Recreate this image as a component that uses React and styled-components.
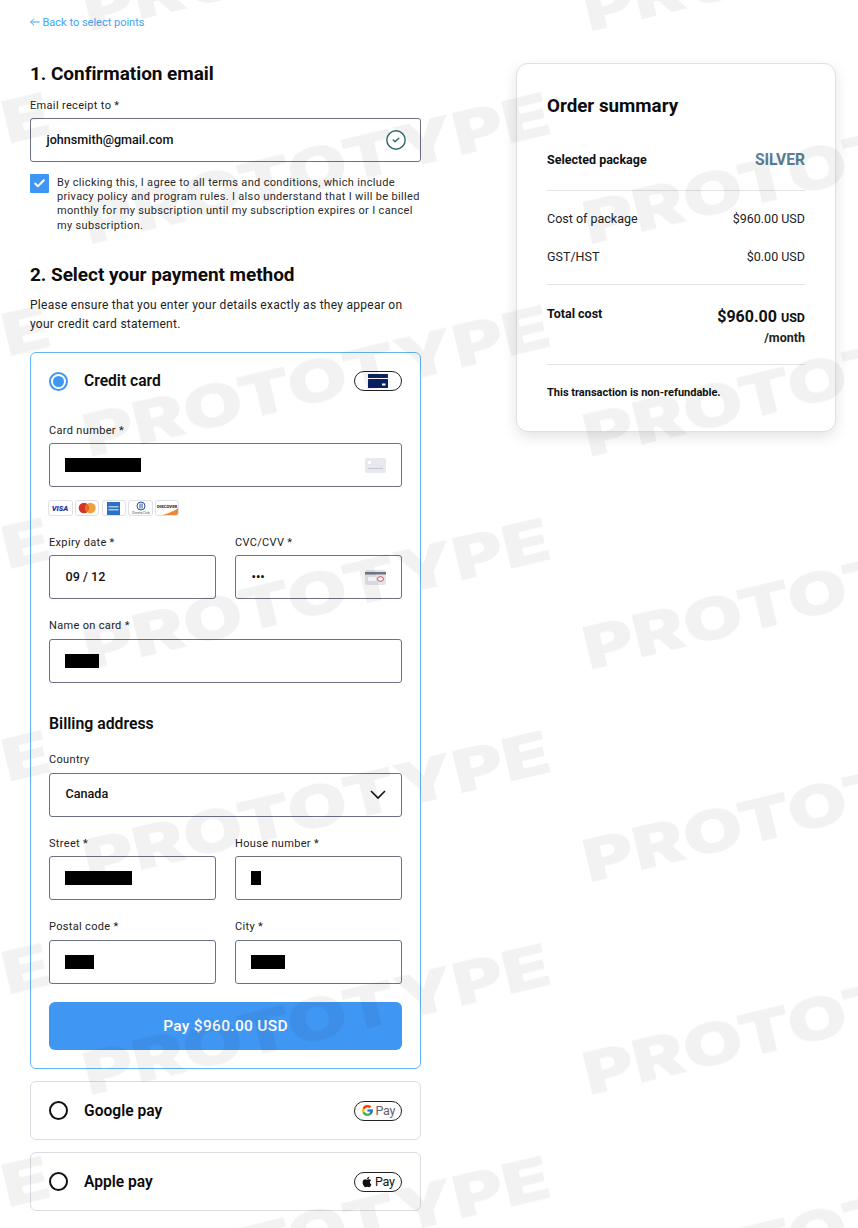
import React from "react";
import styled, { createGlobalStyle } from "styled-components";
import { Check, CircleCheck } from "lucide-react";
import { FaApple } from "react-icons/fa";
import { FcGoogle } from "react-icons/fc";

const Global = createGlobalStyle`
  html, body { margin: 0; padding: 0; background: #fff; }
  body { font-family: Roboto, "Liberation Sans", sans-serif; color: #111; }
  * { box-sizing: border-box; }
`;

const Page = styled.div`
  position: relative;
  width: 858px;
  height: 1228px;
  overflow: hidden;
  display: grid;
  grid-template-columns: 391px 320px;
  column-gap: 95px;
  align-items: start;
  padding: 15px 22px 0 30px;
`;

const LeftColumn = styled.main`
  display: flex;
  flex-direction: column;
`;

const BackLink = styled.a`
  display: flex;
  align-items: center;
  gap: 2.5px;
  height: 14px;
  font-size: 11px;
  color: #42a5f5;
  margin-bottom: 33px;
`;

const Heading = styled.h2`
  margin: 0;
  font-size: 19px;
  line-height: 24px;
  font-weight: 700;
  letter-spacing: -0.05px;
  color: #0c0c0c;
`;

const Label = styled.label`
  display: block;
  font-size: 11px;
  line-height: 14.5px;
  letter-spacing: 0.03em;
  color: #222;
  margin-bottom: 5px;
`;

const EmailField = styled.div`
  margin-top: 12.5px;
`;

const Input = styled.div`
  height: 44px;
  display: flex;
  align-items: center;
  justify-content: space-between;
  padding: 0 15px;
  border: 1px solid #6c7185;
  border-radius: 3px;
  background: #fff;
  font-size: 12.6px;
  font-weight: 500;
  color: #111;
`;

const Value = styled.span`
  display: block;
  padding: 0 0 1.5px 0.5px;
`;

const Redacted = styled.span`
  display: block;
  height: 14px;
  width: ${(p) => p.$w}px;
  background: #000;
`;

const ValidIcon = styled(CircleCheck)`
  margin-right: -1.5px;
`;

const Consent = styled.div`
  display: flex;
  gap: 8px;
  margin-top: 12px;
`;

const CheckBox = styled.span`
  flex: none;
  width: 19px;
  height: 19px;
  display: flex;
  align-items: center;
  justify-content: center;
  background: #4096f3;
  color: #fff;
  border-radius: 1px;
`;

const ConsentText = styled.p`
  margin: 2px 0 0;
  font-size: 11px;
  line-height: 14.2px;
  letter-spacing: 0.03em;
  color: #2a2a2a;
`;

const PaymentHeading = styled(Heading)`
  margin-top: 30.2px;
`;

const Intro = styled.p`
  margin: 8.5px 0 0;
  font-size: 12px;
  line-height: 19px;
  letter-spacing: 0.27px;
  color: #222;
`;

const MethodCard = styled.section`
  margin-top: 18.5px;
  padding: ${(p) => (p.$open ? "18px" : "18.5px 18px")};
  border: 1px solid ${(p) => (p.$open ? "#64b5f6" : "#dcdde4")};
  border-radius: 6px;
  background: #fff;
  & + & {
    margin-top: 12px;
  }
`;

const MethodHeader = styled.div`
  display: flex;
  align-items: center;
  height: 20px;
`;

const Radio = styled.span`
  flex: none;
  width: 19px;
  height: 19px;
  border-radius: 50%;
  border: ${(p) => (p.$on ? "2px solid #4096f3" : "2px solid #111")};
  display: flex;
  align-items: center;
  justify-content: center;
  &::after {
    content: "";
    display: ${(p) => (p.$on ? "block" : "none")};
    width: 11px;
    height: 11px;
    border-radius: 50%;
    background: #4096f3;
  }
`;

const MethodTitle = styled.span`
  margin-left: 16px;
  flex: 1;
  font-size: 15.6px;
  font-weight: 600;
  color: #0c0c0c;
`;

const Pill = styled.span`
  flex: none;
  width: 48px;
  height: 20px;
  border: 1px solid #222;
  border-radius: 10px;
  display: flex;
  align-items: center;
  justify-content: center;
  gap: 1.5px;
  font-size: 12.5px;
  letter-spacing: -0.3px;
  color: ${(p) => p.$ink || "#111"};
`;

const Fields = styled.div`
  display: flex;
  flex-direction: column;
  gap: 20px;
`;

const CardFields = styled.div`
  margin-top: 32.5px;
`;

const Row = styled.div`
  display: grid;
  grid-template-columns: 1fr 1fr;
  column-gap: 19px;
`;

const BrandRow = styled.div`
  display: flex;
  gap: 2.4px;
  margin: 13px 0 19.5px -0.7px;
`;

const Brand = styled.span`
  width: 24.3px;
  height: 16px;
  border: 1px solid #dfe1e8;
  border-radius: 3px;
  background: #fff;
  display: flex;
  align-items: center;
  justify-content: center;
  overflow: hidden;
`;

const Spacer = styled.div`
  height: 20px;
`;

const SubHeading = styled.h3`
  margin: 31.5px 0 0;
  font-size: 15.8px;
  line-height: 20px;
  font-weight: 600;
  color: #0c0c0c;
`;

const BillingFields = styled(Fields)`
  margin-top: 19px;
`;

const PayButton = styled.button`
  display: block;
  width: 100%;
  height: 48px;
  margin-top: 18.5px;
  border: 0;
  border-radius: 6px;
  background: #4096f3;
  color: #fff;
  font-family: inherit;
  font-size: 15.5px;
  font-weight: 500;
  letter-spacing: 0.3px;
`;

const Summary = styled.aside`
  margin-top: 48px;
  height: 369px;
  padding: 0 30px;
  border: 1px solid #e0e0e6;
  border-radius: 12px;
  background: #fff;
  box-shadow: 0 5px 14px rgba(30, 30, 50, 0.12);
`;

const SummaryTitle = styled.h2`
  margin: 30px 0 0;
  font-size: 18.8px;
  line-height: 24px;
  font-weight: 700;
  color: #0c0c0c;
`;

const SummaryRow = styled.div`
  display: flex;
  justify-content: space-between;
  align-items: ${(p) => p.$align || "center"};
  font-size: 12.5px;
  color: #222;
  height: ${(p) => p.$h || 20}px;
  margin-top: ${(p) => p.$mt || 0}px;
`;

const Strong = styled.span`
  font-size: 12.5px;
  font-weight: 700;
  color: #111;
`;

const Silver = styled.span`
  padding-top: 2px;
  font-size: 15.6px;
  font-weight: 700;
  color: #5b7f99;
`;

const Divider = styled.hr`
  margin: ${(p) => p.$mt}px 0 0;
  border: 0;
  border-top: 1px solid #e2e3e8;
`;

const TotalBlock = styled.div`
  display: flex;
  flex-direction: column;
  align-items: flex-end;
  padding-top: 1px;
`;

const Amount = styled.span`
  font-size: 16px;
  line-height: 20px;
  font-weight: 700;
  color: #111;
`;

const AmountUnit = styled.span`
  font-size: 12.5px;
`;

const Month = styled.span`
  font-size: 12.5px;
  line-height: 20px;
  font-weight: 700;
`;

const Refund = styled.p`
  margin: 21px 0 0;
  font-size: 11px;
  line-height: 14px;
  font-weight: 700;
  color: #111;
`;

const Watermark = styled.svg`
  position: absolute;
  inset: 0;
  width: 858px;
  height: 1228px;
  pointer-events: none;
`;

const TILE_H = 212.7;

function WatermarkLayer() {
  return (
    <Watermark aria-hidden="true">
      <defs>
        <pattern id="wm" width="500" height={TILE_H} patternUnits="userSpaceOnUse">
          {[-500, 0, 500].flatMap((dx) =>
            [-1, 0, 1, 2].map((n) => (
              <text
                key={`${dx}_${n}`}
                transform={`translate(${89 + dx} ${31.9 + n * TILE_H}) rotate(-13.5)`}
                fontFamily="Inter, Roboto, sans-serif"
                fontWeight="900"
                fontSize="59"
                textLength="478"
                lengthAdjust="spacingAndGlyphs"
                fill="rgba(0,0,0,0.05)"
              >
                PROTOTYPE
              </text>
            ))
          )}
        </pattern>
      </defs>
      <rect width="858" height="1228" fill="url(#wm)" />
    </Watermark>
  );
}

const BackArrow = () => (
  <svg width="10" height="8" viewBox="0 0 10 8" fill="none" stroke="#42a5f5" strokeWidth="1">
    <path d="M0.5 4h9.2M4 0.7L0.7 4 4 7.3" />
  </svg>
);

const CardGlyph = () => (
  <svg width="22" height="14" viewBox="0 0 22 14">
    <rect x="1" y="0" width="20" height="4" fill="#0b2265" rx="0.5" />
    <rect x="1" y="5" width="20" height="9" fill="#0b2265" rx="0.5" />
    <rect x="15" y="9.5" width="3.5" height="2" fill="#fff" />
  </svg>
);

const NumberIcon = () => (
  <svg width="21" height="15" viewBox="0 0 21 15">
    <rect width="21" height="15" rx="2" fill="#e7e9ee" />
    <rect x="3" y="3" width="3" height="3" fill="#fff" />
    <rect x="3" y="10" width="15" height="1" fill="#c4c7cf" />
  </svg>
);

const CvcIcon = () => (
  <svg width="21" height="15" viewBox="0 0 21 15">
    <rect width="21" height="15" rx="2" fill="#e3e5ea" />
    <rect y="2" width="21" height="2.5" fill="#737685" />
    <rect x="3" y="7" width="8" height="4" fill="#fff" />
    <ellipse cx="15.5" cy="9" rx="3" ry="2.3" fill="#fff" stroke="#d5485d" strokeWidth="1" />
  </svg>
);

const Chevron = () => (
  <svg width="16" height="10" viewBox="0 0 16 10" fill="none" stroke="#111" strokeWidth="1.6">
    <path d="M1 1l7 7 7-7" />
  </svg>
);

const Visa = () => (
  <svg width="22" height="12" viewBox="0 0 22 12">
    <text x="11" y="9" textAnchor="middle" fontFamily="Roboto, sans-serif" fontStyle="italic" fontWeight="900" fontSize="7.5" fill="#26339a">VISA</text>
  </svg>
);
const Master = () => (
  <svg width="20" height="12" viewBox="0 0 20 12">
    <circle cx="7" cy="6" r="5.3" fill="#d2342a" />
    <circle cx="13.4" cy="6" r="5.3" fill="#f0a23a" />
    <path d="M10.2 1.8a5.3 5.3 0 0 1 0 8.4a5.3 5.3 0 0 1 0-8.4z" fill="#e56a2c" />
  </svg>
);
const Amex = () => (
  <svg width="13" height="13" viewBox="0 0 13 13">
    <rect width="13" height="13" fill="#2b72c5" />
    <rect x="1.5" y="4" width="10" height="1.5" fill="#a9c8ea" />
    <rect x="1.5" y="7" width="10" height="1.5" fill="#a9c8ea" />
  </svg>
);
const Diners = () => (
  <svg width="22" height="14" viewBox="0 0 22 14">
    <circle cx="11" cy="5" r="4" fill="none" stroke="#26539a" strokeWidth="1" />
    <path d="M10 2.5v5M12 2.5v5" stroke="#26539a" strokeWidth="1" />
    <text x="11" y="13" textAnchor="middle" fontFamily="Roboto, sans-serif" fontSize="3.6" fill="#555">DinersClub</text>
  </svg>
);
const Discover = () => (
  <svg width="24" height="16" viewBox="0 0 24 16">
    <path d="M4 16C12 15 19 11 24 8v8z" fill="#e98a3a" />
    <text x="12" y="7.5" textAnchor="middle" fontFamily="Roboto, sans-serif" fontWeight="900" fontSize="4.6" fill="#333">DISCOVER</text>
  </svg>
);

const Field = ({ label, children }) => (
  <div>
    <Label>{label}</Label>
    <Input>{children}</Input>
  </div>
);

export default function App() {
  return (
    <>
      <Global />
      <Page>
        <LeftColumn>
          <BackLink>
            <BackArrow />
            Back to select points
          </BackLink>
          <Heading>1. Confirmation email</Heading>
          <EmailField>
            <Label>Email receipt to *</Label>
            <Input>
              <Value>johnsmith@gmail.com</Value>
              <ValidIcon size={22} color="#2f6f68" strokeWidth={1.6} />
            </Input>
          </EmailField>
          <Consent>
            <CheckBox>
              <Check size={13} strokeWidth={3.5} />
            </CheckBox>
            <ConsentText>
              By clicking this, I agree to all terms and conditions, which include privacy policy and program rules. I also understand that I will be billed monthly for my subscription until my subscription expires or I cancel my subscription.
            </ConsentText>
          </Consent>
          <PaymentHeading>2. Select your payment method</PaymentHeading>
          <Intro>
            Please ensure that you enter your details exactly as they appear on your credit card statement.
          </Intro>

          <MethodCard $open>
            <MethodHeader>
              <Radio $on />
              <MethodTitle>Credit card</MethodTitle>
              <Pill><CardGlyph /></Pill>
            </MethodHeader>
            <CardFields>
              <Field label="Card number *">
                <Redacted $w={76} />
                <NumberIcon />
              </Field>
              <BrandRow>
                <Brand><Visa /></Brand>
                <Brand><Master /></Brand>
                <Brand><Amex /></Brand>
                <Brand><Diners /></Brand>
                <Brand><Discover /></Brand>
              </BrandRow>
              <Row>
                <Field label="Expiry date *"><Value>09 / 12</Value></Field>
                <Field label="CVC/CVV *">
                  <Value>•••</Value>
                  <CvcIcon />
                </Field>
              </Row>
              <Spacer />
              <Field label="Name on card *"><Redacted $w={34} /></Field>
            </CardFields>
            <SubHeading>Billing address</SubHeading>
            <BillingFields>
              <Field label="Country">
                <Value>Canada</Value>
                <Chevron />
              </Field>
              <Row>
                <Field label="Street *"><Redacted $w={67} /></Field>
                <Field label="House number *"><Redacted $w={10} /></Field>
              </Row>
              <Row>
                <Field label="Postal code *"><Redacted $w={29} /></Field>
                <Field label="City *"><Redacted $w={34} /></Field>
              </Row>
            </BillingFields>
            <PayButton>Pay $960.00 USD</PayButton>
          </MethodCard>

          <MethodCard>
            <MethodHeader>
              <Radio />
              <MethodTitle>Google pay</MethodTitle>
              <Pill $ink="#5f6368"><FcGoogle size={13} />Pay</Pill>
            </MethodHeader>
          </MethodCard>
          <MethodCard>
            <MethodHeader>
              <Radio />
              <MethodTitle>Apple pay</MethodTitle>
              <Pill><FaApple size={12} />Pay</Pill>
            </MethodHeader>
          </MethodCard>
        </LeftColumn>

        <Summary>
          <SummaryTitle>Order summary</SummaryTitle>
          <SummaryRow $mt={31}>
            <Strong>Selected package</Strong>
            <Silver>SILVER</Silver>
          </SummaryRow>
          <Divider $mt={21} />
          <SummaryRow $mt={17}><span>Cost of package</span><span>$960.00 USD</span></SummaryRow>
          <SummaryRow $mt={18}><span>GST/HST</span><span>$0.00 USD</span></SummaryRow>
          <Divider $mt={18} />
          <SummaryRow $mt={21} $h={50} $align="flex-start">
            <Strong>Total cost</Strong>
            <TotalBlock>
              <Amount>$960.00 <AmountUnit>USD</AmountUnit></Amount>
              <Month>/month</Month>
            </TotalBlock>
          </SummaryRow>
          <Divider $mt={8} />
          <Refund>This transaction is non-refundable.</Refund>
        </Summary>
        <WatermarkLayer />
      </Page>
    </>
  );
}
